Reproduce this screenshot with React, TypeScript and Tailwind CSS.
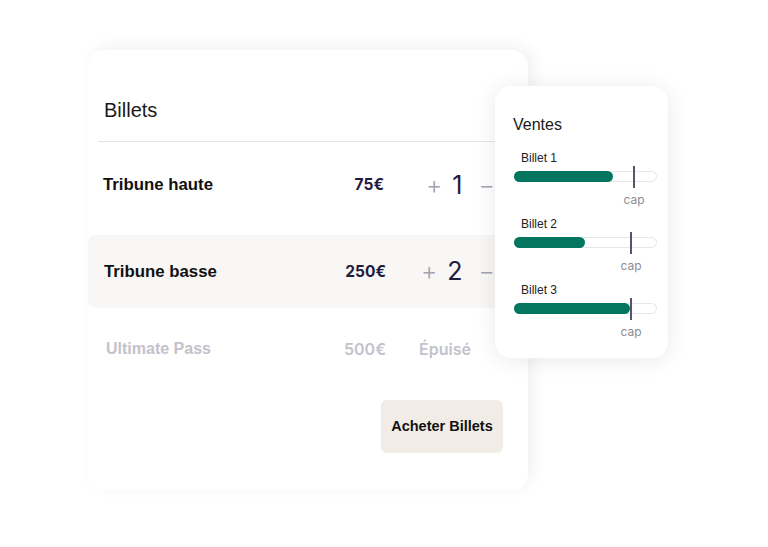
import React from 'react';

const sans = "font-['Liberation_Sans',Arial,sans-serif]";
const geo = "font-['Inter',sans-serif]";

interface Bar {
  label: string;
  fill: number;
  cap: number;
}

const bars: Bar[] = [
  { label: 'Billet 1', fill: 99, cap: 119 },
  { label: 'Billet 2', fill: 71, cap: 116 },
  { label: 'Billet 3', fill: 116, cap: 116 },
];

function Counter({ value, shift }: { value: number; shift: string }) {
  return (
    <div className={`flex items-center ${shift} ${geo}`}>
      <span className="text-[25px] leading-none text-[#a3a2b0] font-light">+</span>
      <span className="ml-[10px] text-[25px] leading-none text-[#1f1c3d] font-normal">{value}</span>
      <span className="ml-[16px] text-[25px] leading-none text-[#a3a2b0] font-light">−</span>
    </div>
  );
}

function SalesPanel() {
  return (
    <div className="absolute left-[495px] top-[86px] w-[173px] h-[272px] bg-white rounded-2xl shadow-[0_2px_22px_rgba(20,20,40,0.09)] pt-[28px] pl-[19px] pr-[11px]">
      <div className={`${sans} text-[16px] leading-[22px] text-[#1a1a1a] -ml-[1px]`}>Ventes</div>
      <div className="mt-[14px]">
        {bars.map((b, i) => (
          <div key={b.label} className={i > 0 ? 'mt-[8px]' : ''}>
            <div className={`${sans} text-[12px] leading-[16px] text-[#222] pl-[7px]`}>{b.label}</div>
            <div className="relative mt-[5px] h-[11px] w-[143px] rounded-full border border-[#e6e6ea] bg-white">
              <div
                className="absolute -left-px -top-px h-[11px] rounded-full bg-[#04765f]"
                style={{ width: b.fill }}
              />
              <div
                className="absolute top-[-6px] h-[22px] w-[2px] bg-[#55546a]"
                style={{ left: b.cap - 1 }}
              />
            </div>
            <div className="relative h-[16px] mt-[10px]">
              <span
                className={`absolute -translate-x-1/2 ${geo} text-[12px] leading-[16px] text-[#8d8c96]`}
                style={{ left: b.cap + 1 }}
              >
                cap
              </span>
            </div>
          </div>
        ))}
      </div>
    </div>
  );
}

export default function App() {
  return (
    <div className="relative w-[768px] h-[547px] bg-white overflow-hidden">
      <div className="absolute left-[88px] top-[50px] w-[440px] h-[440px] bg-white rounded-2xl shadow-[5px_-3px_16px_rgba(20,20,40,0.06)]">
        <div className={`${sans} pt-[46px] pb-[17px] pl-[16px] text-[20px] leading-[28px] text-[#1a1a1a]`}>
          Billets
        </div>
        <div className="mx-[10px] border-t border-[#e4e4e8]" />

        <div className="flex items-center h-[86px] pl-[15px]">
          <div className={`${sans} flex-1 text-[16.8px] font-bold text-[#111]`}>Tribune haute</div>
          <div className={`${geo} w-[80px] text-right text-[15.5px] font-bold text-[#1f1c3d] pr-[2px]`}>75€</div>
          <div className="w-[142px]">
            <Counter value={1} shift="ml-[40px]" />
          </div>
        </div>

        <div className="flex items-center h-[73px] mt-[7px] pl-[16px] bg-[#f8f7f5] rounded-lg">
          <div className={`${sans} flex-1 text-[16.8px] font-bold text-[#111]`}>Tribune basse</div>
          <div className={`${geo} w-[80px] text-right text-[15.5px] font-bold text-[#1f1c3d]`}>250€</div>
          <div className="w-[142px]">
            <Counter value={2} shift="ml-[35px]" />
          </div>
        </div>

        <div className="flex items-center h-[82px] pl-[18px]">
          <div className={`${sans} flex-1 text-[16px] font-bold text-[#c3c2cb]`}>Ultimate Pass</div>
          <div className={`${geo} w-[80px] text-right text-[16px] font-semibold text-[#c3c2cb]`}>500€</div>
          <div className="w-[142px]">
            <div className={`${geo} ml-[33px] text-[16px] font-semibold text-[#c3c2cb]`}>Épuisé</div>
          </div>
        </div>

        <div className="flex justify-end mt-[10px] pr-[25px]">
          <button className={`${sans} h-[53px] w-[122px] rounded-md bg-[#f1ece6] text-[14.5px] font-bold text-[#111]`}>
            Acheter Billets
          </button>
        </div>
      </div>
      <SalesPanel />
    </div>
  );
}
